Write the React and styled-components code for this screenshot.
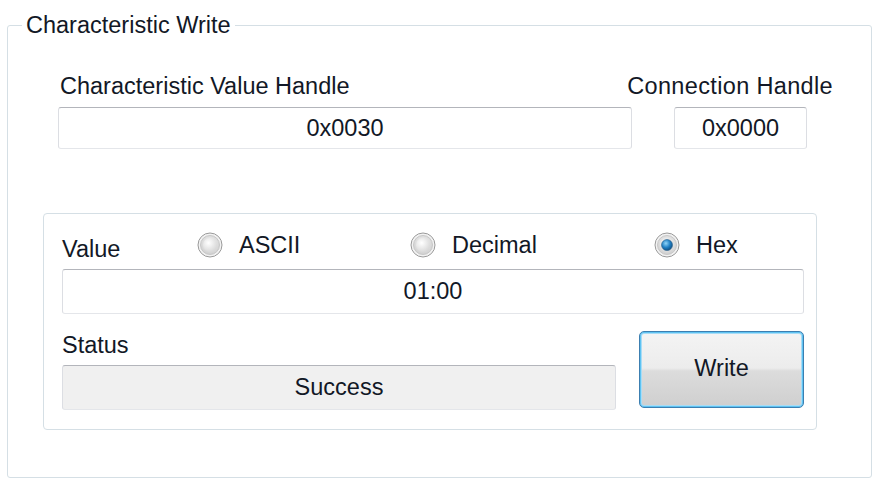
import React from "react";
import styled, { createGlobalStyle } from "styled-components";

const Global = createGlobalStyle`
  html, body { margin: 0; padding: 0; background: #ffffff; }
  body { font-family: "Liberation Sans", Arial, sans-serif; color: #121826; }
`;

const Page = styled.div`
  width: 876px;
  height: 484px;
  padding: 13px 0 0 7px;
  box-sizing: border-box;
  background: #ffffff;
`;

const GroupBox = styled.fieldset`
  margin: 0;
  width: 865px;
  box-sizing: border-box;
  border: 1px solid #d5dfe5;
  border-radius: 3px;
  padding: 36px 0 47px 0;
  min-width: 0;
`;

const Legend = styled.legend`
  margin-left: 14px;
  padding: 0 4px;
  font-size: 23.5px;
  line-height: 24px;
  height: 24px;
  color: #121826;
`;

const Text = styled.span`
  font-size: 23.5px;
  line-height: 26px;
  white-space: nowrap;
  color: #121826;
`;

const LabelRow = styled.div`
  display: flex;
  justify-content: space-between;
  padding: 0 38px 0 52px;
  height: 26px;
`;

const WideLabel = styled(Text)`
  letter-spacing: 0.35px;
`;

const BoxRow = styled.div`
  display: flex;
  gap: 42px;
  margin: 8px 0 0 50px;
`;

const Field = styled.div`
  width: ${(p) => p.$w}px;
  height: ${(p) => p.$h}px;
  box-sizing: border-box;
  border: 1px solid;
  border-color: #b3b5bb #dcdee3 #e4e6ea #dcdee3;
  border-radius: 3px;
  background: ${(p) => (p.$readonly ? "#f0f0f0" : "#ffffff")};
  display: flex;
  align-items: center;
  justify-content: center;
  font-size: 23.5px;
  color: #121826;
  white-space: nowrap;
`;

const InnerBox = styled.div`
  margin: 64px 0 0 35px;
  width: 774px;
  box-sizing: border-box;
  border: 1px solid #d5dfe5;
  border-radius: 4px;
  padding: 18px 12px 19px 18px;
`;

const OptionRow = styled.div`
  display: grid;
  grid-template-columns: 135px 213px 244px auto;
  align-items: start;
`;

const ValueLabel = styled(Text)`
  padding-top: 4px;
  display: block;
`;

const Radio = styled.label`
  display: flex;
  align-items: center;
  gap: 16px;
  height: 26px;
`;

const RadioText = styled(Text)`
  line-height: 26px;
`;

const ValueField = styled(Field)`
  margin-top: 7px;
`;

const BottomRow = styled.div`
  display: flex;
  align-items: flex-start;
  gap: 23px;
  margin-top: 17px;
`;

const StatusCol = styled.div`
  display: flex;
  flex-direction: column;
  gap: 7px;
  padding-top: 1px;
`;

const WriteButton = styled.button`
  width: 165px;
  height: 77px;
  box-sizing: border-box;
  border: 1px solid #3c7fb1;
  border-radius: 5px;
  box-shadow: inset 0 0 0 1px #5ec3f2, inset 0 0 0 2px #a8dcf6;
  background: linear-gradient(
    to bottom,
    #f4f4f4 0%,
    #ececec 48%,
    #dcdcdc 52%,
    #cfcfcf 100%
  );
  font-family: "Liberation Sans", Arial, sans-serif;
  font-size: 23.5px;
  color: #121826;
  padding: 0 0 2px 0;
  cursor: pointer;
`;

function RadioDot({ checked }) {
  return (
    <svg width="26" height="26" viewBox="0 0 26 26">
      <defs>
        <radialGradient id="rg-ring" cx="50%" cy="40%" r="60%">
          <stop offset="0%" stopColor="#f6f6f6" />
          <stop offset="100%" stopColor="#cfcfcf" />
        </radialGradient>
        <radialGradient id="rg-in" cx="40%" cy="35%" r="70%">
          <stop offset="0%" stopColor="#ffffff" />
          <stop offset="100%" stopColor="#d6d6d6" />
        </radialGradient>
        <radialGradient id="rg-dot" cx="40%" cy="35%" r="70%">
          <stop offset="0%" stopColor="#8fd4f8" />
          <stop offset="55%" stopColor="#1f7fc4" />
          <stop offset="100%" stopColor="#0e4a7a" />
        </radialGradient>
      </defs>
      <circle cx="13" cy="13" r="12" fill="#f2f2f2" stroke="#9a9a9a" strokeWidth="1" />
      <circle cx="13" cy="13" r="9.5" fill="url(#rg-ring)" stroke="#c8c8c8" strokeWidth="1" />
      <circle cx="13" cy="13" r="7" fill="url(#rg-in)" />
      {checked && <circle cx="13" cy="13" r="5.5" fill="url(#rg-dot)" stroke="#2a5f8a" strokeWidth="0.6" />}
    </svg>
  );
}

export default function App() {
  return (
    <>
      <Global />
      <Page>
        <GroupBox>
          <Legend>Characteristic Write</Legend>
          <LabelRow>
            <Text>Characteristic Value Handle</Text>
            <WideLabel>Connection Handle</WideLabel>
          </LabelRow>
          <BoxRow>
            <Field $w={574} $h={42}>0x0030</Field>
            <Field $w={133} $h={42}>0x0000</Field>
          </BoxRow>
          <InnerBox>
            <OptionRow>
              <ValueLabel>Value</ValueLabel>
              <Radio>
                <RadioDot />
                <RadioText>ASCII</RadioText>
              </Radio>
              <Radio>
                <RadioDot />
                <RadioText>Decimal</RadioText>
              </Radio>
              <Radio>
                <RadioDot checked />
                <RadioText>Hex</RadioText>
              </Radio>
            </OptionRow>
            <ValueField $w={742} $h={45}>01:00</ValueField>
            <BottomRow>
              <StatusCol>
                <Text>Status</Text>
                <Field $w={554} $h={45} $readonly>Success</Field>
              </StatusCol>
              <WriteButton type="button">Write</WriteButton>
            </BottomRow>
          </InnerBox>
        </GroupBox>
      </Page>
    </>
  );
}
